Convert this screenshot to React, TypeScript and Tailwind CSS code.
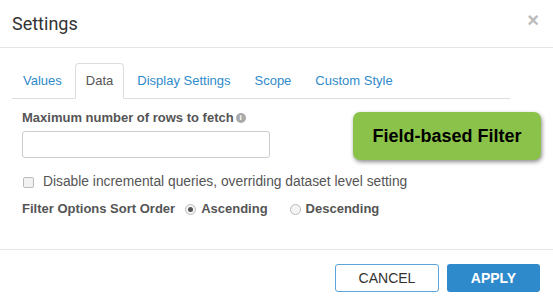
import React from 'react';

const tabs = ['Values', 'Data', 'Display Settings', 'Scope', 'Custom Style'];

export default function App() {
  return (
    <div className="relative w-[553px] h-[306px] bg-white overflow-hidden font-['Liberation_Sans',Arial,sans-serif] text-[#555]">
      {/* Header */}
      <div className="h-[48px] flex items-center justify-between pl-[12px] pr-[14px] border-b border-[#e5e5e5]">
        <h1 className="text-[18px] text-[#333] font-['Roboto',sans-serif] font-normal">Settings</h1>
        <span className="text-[#bbb] text-[20px] font-bold leading-none -mt-[8px]">×</span>
      </div>

      {/* Body */}
      <div className="px-[12px] pt-[15px] h-[202px] border-b border-[#e5e5e5]">
        <ul className="flex w-[498px] border-b border-[#ddd] text-[13px]">
          {tabs.map((t) => (
            <li
              key={t}
              className={`mr-[2px] -mb-px h-[36px] px-[10px] flex items-center rounded-t-[4px] border ${
                t === 'Data'
                  ? 'border-[#ddd] border-b-white bg-white text-[#555]'
                  : 'border-transparent text-[#2f8acb]'
              }`}
            >
              {t}
            </li>
          ))}
        </ul>

        <div className="px-[10px] pt-[11px]">
          <label className="flex items-center gap-[2px] text-[13px] font-bold text-[#555] h-[16px]">
            Maximum number of rows to fetch
            <span className="w-[10px] h-[10px] rounded-full bg-[#aaa] text-white text-[8px] leading-[10px] text-center font-bold">i</span>
          </label>
          <input
            type="text"
            className="mt-[5px] block w-[248px] h-[27px] border border-[#ccc] rounded-[3px] outline-none"
          />

          <div className="mt-[17px] flex items-center gap-[9px] text-[13.8px] h-[14px]">
            <span className="ml-[1px] w-[11px] h-[11px] border border-[#bbb] rounded-[2px] bg-[#f2f2f2]"></span>
            <span>Disable incremental queries, overriding dataset level setting</span>
          </div>

          <div className="mt-[12px] flex items-center text-[13px] font-bold h-[16px]">
            <span>Filter Options Sort Order</span>
            <span className="ml-[10px] w-[11px] h-[11px] rounded-full border border-[#bbb] bg-[#f4f4f4] flex items-center justify-center">
              <span className="w-[5px] h-[5px] rounded-full bg-[#555]"></span>
            </span>
            <span className="ml-[5px]">Ascending</span>
            <span className="ml-[22px] w-[11px] h-[11px] rounded-full border border-[#bbb] bg-[#f4f4f4]"></span>
            <span className="ml-[5px]">Descending</span>
          </div>
        </div>
      </div>

      {/* Footer */}
      <div className="flex justify-end gap-[8px] pr-[13px] pt-[14px]">
        <button className="w-[104px] h-[28px] border border-[#5ba4dc] rounded-[3px] bg-white text-[#333] text-[14px]">
          CANCEL
        </button>
        <button className="w-[93px] h-[28px] rounded-[3px] bg-[#2f8acb] text-white text-[14px] font-bold">
          APPLY
        </button>
      </div>

      {/* Annotation */}
      <div className="absolute left-[353px] top-[112px] w-[188px] h-[48px] rounded-[7px] bg-[#8bc34a] shadow-[1px_2px_4px_rgba(0,0,0,0.45)] flex items-center justify-center text-black text-[18px] font-bold">
        Field-based Filter
      </div>
    </div>
  );
}
